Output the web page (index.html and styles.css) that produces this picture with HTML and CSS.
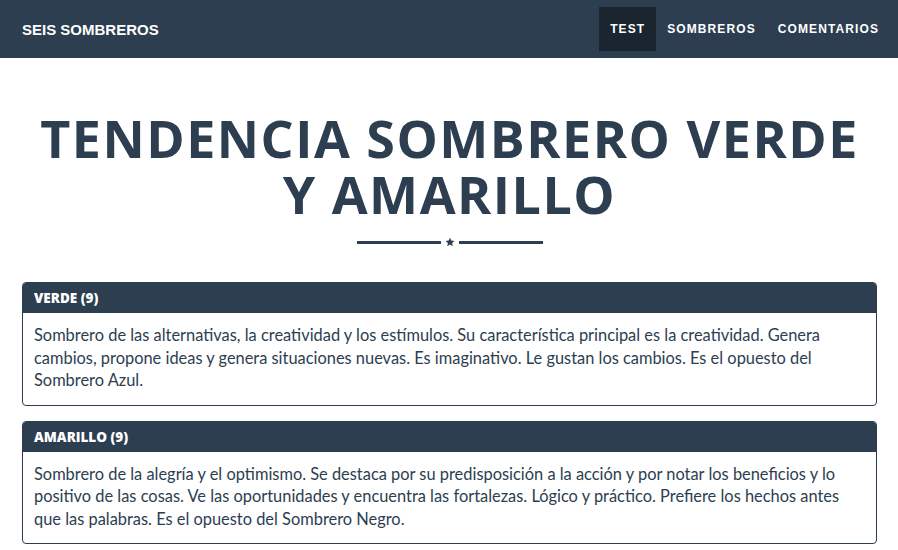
FILE: index.html
```html
<!DOCTYPE html>
<html lang="es">
<head>
<meta charset="utf-8">
<title>Seis Sombreros</title>
<link rel="stylesheet" href="styles.css">
</head>
<body>
<nav class="navbar">
  <a class="brand" href="#">SEIS SOMBREROS</a>
  <ul class="nav">
    <li><a class="active" href="#">TEST</a></li>
    <li><a href="#">SOMBREROS</a></li>
    <li><a href="#">COMENTARIOS</a></li>
  </ul>
</nav>
<main class="container">
  <h1 class="title">TENDENCIA SOMBRERO VERDE<br>Y AMARILLO</h1>
  <div class="divider">
    <span class="line"></span>
    <svg class="star" width="10" height="10" viewBox="0 0 24 24"><path d="M12 1.5l3.1 7.1 7.7.7-5.8 5.1 1.7 7.6L12 18l-6.7 4 1.7-7.6L1.2 9.3l7.7-.7z" fill="#2c3e50"/></svg>
    <span class="line"></span>
  </div>
  <section class="panel">
    <div class="panel-heading">VERDE (9)</div>
    <div class="panel-body">Sombrero de las alternativas, la creatividad y los estímulos. Su característica principal es la creatividad. Genera cambios, propone ideas y genera situaciones nuevas. Es imaginativo. Le gustan los cambios. Es el opuesto del Sombrero Azul.</div>
  </section>
  <section class="panel">
    <div class="panel-heading">AMARILLO (9)</div>
    <div class="panel-body">Sombrero de la alegría y el optimismo. Se destaca por su predisposición a la acción y por notar los beneficios y lo positivo de las cosas. Ve las oportunidades y encuentra las fortalezas. Lógico y práctico. Prefiere los hechos antes que las palabras. Es el opuesto del Sombrero Negro.</div>
  </section>
</main>
</body>
</html>
```
FILE: styles.css
```css
* { box-sizing: border-box; }
body {
  margin: 0;
  font-family: "Lato", "Liberation Sans", sans-serif;
  color: #2c3e50;
  background: #fff;
}
.navbar {
  height: 58px;
  background: #2c3e50;
  display: flex;
  align-items: center;
  justify-content: space-between;
  padding: 0 8px 0 22px;
}
.brand {
  color: #fff;
  text-decoration: none;
  font-family: "Liberation Sans", Arial, sans-serif;
  font-weight: 700;
  font-size: 15px;
}
.nav {
  list-style: none;
  margin: 0;
  padding: 0;
  display: flex;
  align-items: center;
}
.nav a {
  display: block;
  color: #fff;
  text-decoration: none;
  font-family: "Liberation Sans", Arial, sans-serif;
  font-weight: 700;
  font-size: 12px;
  letter-spacing: 1.1px;
  padding: 15px 11px;
  line-height: 14px;
}
.nav a.active { background: #1a252f; }
.container {
  padding: 0 21px 0 22px;
}
.title {
  margin: 52px 0 0;
  text-align: center;
  font-family: "Open Sans", sans-serif;
  font-weight: 700;
  font-size: 52px;
  letter-spacing: 1.5px;
  line-height: 56px;
  color: #2c3e50;
}
.divider {
  display: flex;
  align-items: center;
  justify-content: center;
  gap: 4px;
  margin: 15px 0 35px;
}
.line {
  width: 84px;
  height: 3px;
  background: #2c3e50;
}
.panel {
  border: 1px solid #2c3e50;
  border-radius: 4px;
  margin-bottom: 15px;
  overflow: hidden;
}
.panel-heading {
  background: #2c3e50;
  color: #fff;
  font-family: "Open Sans", sans-serif;
  font-weight: 800;
  font-size: 13.5px;
  line-height: 30px;
  padding: 0 11px;
}
.panel-body {
  padding: 11px 11px 13px;
  font-size: 16.4px;
  line-height: 22.5px;
}
```
